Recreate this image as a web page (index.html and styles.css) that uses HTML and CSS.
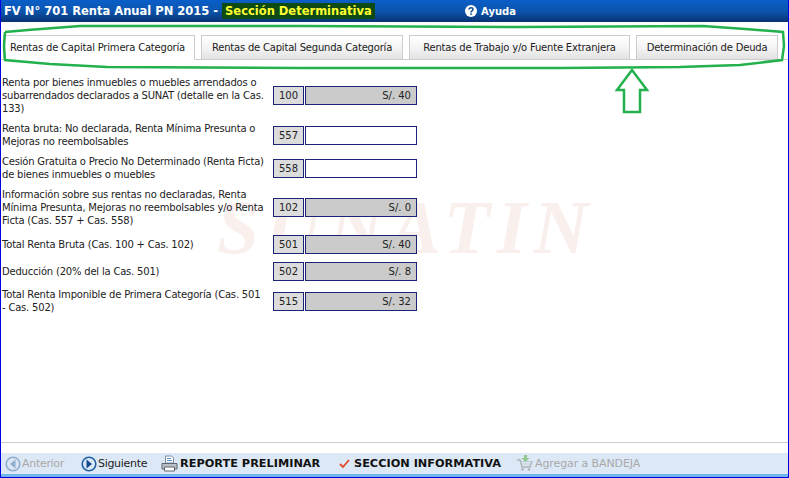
FILE: index.html
```html
<!DOCTYPE html>
<html lang="en">
<head>
    <meta charset="UTF-8">
    <meta name="viewport" content="width=device-width, initial-scale=1.0">
    <title>FV N° 701 Renta Anual PN 2015</title>
    <link rel="stylesheet" href="styles.css">
</head>
<body>

<div class="window">
    <div class="title-bar">
        <div class="title-text">FV N° 701 Renta Anual PN 2015 - <span class="title-section">Sección Determinativa</span></div>
        <div class="help">
            <svg class="help-icon" viewBox="0 0 12 12" width="12" height="12"><circle cx="6" cy="6" r="6" fill="#fff"/><path d="M4 4.600C4 3.400 4.900 2.800 6 2.800s2 .7 2 1.700c0 1.500-2 1.400-2 3" fill="none" stroke="#0b4a94" stroke-width="1.500"/><rect x="5.200" y="8.300" width="1.600" height="1.500" fill="#0b4a94"/></svg>
            Ayuda
        </div>
    </div>

    <div class="tabs">
        <div class="tab tab-active">Rentas de Capital Primera Categoría</div>
        <div class="tab tab-2">Rentas de Capital Segunda Categoría</div>
        <div class="tab tab-3">Rentas de Trabajo y/o Fuente Extranjera</div>
        <div class="tab tab-4">Determinación de Deuda</div>
    </div>

    <div class="content">
        <div class="watermark">SUNATIN</div>

        <div class="form-row">
            <div class="row-label">Renta por bienes inmuebles o muebles arrendados o subarrendados declarados a SUNAT (detalle en la Cas. 133)</div>
            <div class="cas">100</div>
            <div class="amount">S/. 40</div>
        </div>
        <div class="form-row">
            <div class="row-label">Renta bruta: No declarada, Renta Mínima Presunta o Mejoras no reembolsables</div>
            <div class="cas">557</div>
            <div class="amount amount-input"></div>
        </div>
        <div class="form-row">
            <div class="row-label">Cesión Gratuita o Precio No Determinado (Renta Ficta) de bienes inmuebles o muebles</div>
            <div class="cas">558</div>
            <div class="amount amount-input"></div>
        </div>
        <div class="form-row">
            <div class="row-label">Información sobre sus rentas no declaradas, Renta Mínima Presunta, Mejoras no reembolsables y/o Renta Ficta (Cas. 557 + Cas. 558)</div>
            <div class="cas">102</div>
            <div class="amount">S/. 0</div>
        </div>
        <div class="form-row">
            <div class="row-label">Total Renta Bruta (Cas. 100 + Cas. 102)</div>
            <div class="cas">501</div>
            <div class="amount">S/. 40</div>
        </div>
        <div class="form-row">
            <div class="row-label">Deducción (20% del la Cas. 501)</div>
            <div class="cas">502</div>
            <div class="amount">S/. 8</div>
        </div>
        <div class="form-row">
            <div class="row-label">Total Renta Imponible de Primera Categoría (Cas. 501<br>- Cas. 502)</div>
            <div class="cas">515</div>
            <div class="amount">S/. 32</div>
        </div>
    </div>

    <div class="footer">
        <div class="foot-item foot-disabled foot-prev">
            <svg viewBox="0 0 16 16" width="16" height="16"><circle cx="8" cy="8" r="6.800" fill="#dbe6f2" stroke="#8fb0d0" stroke-width="1.600"/><path d="M10.500 3.500v9L5 8z" fill="#8fb0d0"/></svg>
            Anterior
        </div>
        <div class="foot-item foot-next">
            <svg viewBox="0 0 16 16" width="16" height="16"><circle cx="8" cy="8" r="6.800" fill="#dbe8f6" stroke="#1f5fa8" stroke-width="1.600"/><path d="M5.500 3.500v9L11 8z" fill="#174a8c"/></svg>
            Siguiente
        </div>
        <div class="foot-item foot-bold foot-report">
            <svg viewBox="0 0 17 17" width="17" height="17"><path d="M4.500 1h6l2 2v5h-8z" fill="#fff" stroke="#7f8fa3"/><path d="M6 3.500h4M6 5.500h5" stroke="#5d8fc4"/><path d="M1 8.500h15v5.500H1z" fill="#b9c0c9" stroke="#5f6670"/><path d="M3.500 12h10v4h-10z" fill="#fff" stroke="#5f6670"/></svg>
            REPORTE PRELIMINAR
        </div>
        <div class="foot-item foot-bold foot-info">
            <svg viewBox="0 0 11 11" width="11" height="11"><path d="M1 6l3 3 6-7" fill="none" stroke="#e0472c" stroke-width="1.800"/></svg>
            SECCION INFORMATIVA
        </div>
        <div class="foot-item foot-disabled foot-cart">
            <svg viewBox="0 0 17 17" width="17" height="17"><path d="M1 5h3l2 7h8l2-6" fill="none" stroke="#a9b3b5" stroke-width="1.300"/><path d="M5 6.500h10M5.500 9h9" stroke="#c3cbcc"/><circle cx="6.500" cy="14.500" r="1.300" fill="#a9b3b5"/><circle cx="13" cy="14.500" r="1.300" fill="#a9b3b5"/><path d="M8 0h3v3h2.500L9.500 7 5.500 3H8z" fill="#8fc78f"/></svg>
            Agregar a BANDEJA
        </div>
    </div>
</div>

<!-- Green marks drawn over the screenshot -->
<svg class="annotation" viewBox="0 0 789 478" width="789" height="478">
    <polyline points="5,32 28,30 80,26 300,26 520,27 703,26 745,29 783,32 784,46 782,60 740,65 680,67 560,68 300,68 107,67 50,64 5,60 4,46 5,32" fill="none" stroke="#22b14c" stroke-width="2.500"/>
    <polygon points="632,70 617,90 624,90 624,112 640,112 640,90 647,90" fill="none" stroke="#22b14c" stroke-width="2.500"/>
</svg>

</body>
</html>
```

FILE: styles.css
```css
html, body {
    margin: 0;
    padding: 0;
}

body {
    width: 789px;
    height: 478px;
    overflow: hidden;
    font-family: "DejaVu Sans", sans-serif;
    font-size: 10px;
    letter-spacing: -0.2px;
    color: #222;
    background-color: #fff;
}

.window {
    box-sizing: border-box;
    width: 789px;
    height: 478px;
    display: flex;
    flex-direction: column;
    border-left: 1px solid #0000e6;
    border-right: 1px solid #0000e6;
    border-bottom: 1px solid #0000e6;
}

.title-bar {
    height: 22px;
    flex-shrink: 0;
    position: relative;
    display: flex;
    align-items: center;
    padding-left: 3px;
    background: linear-gradient(#0a5ec8, #0b55ae 50%, #0a3272);
    color: #fff;
    font-weight: bold;
    letter-spacing: 0;
}

.title-text {
    font-size: 11.500px;
}

.title-section {
    display: inline-block;
    padding: 1px 3px;
    background-color: #0d4a14;
    color: #ffff33;
}

.help {
    position: absolute;
    left: 464px;
    top: 5px;
    display: flex;
    align-items: center;
    gap: 4px;
    font-size: 10px;
}

.tabs {
    height: 38px;
    flex-shrink: 0;
    box-sizing: border-box;
    display: flex;
    align-items: flex-end;
    gap: 6px;
    padding-left: 2px;
    border-bottom: 1px solid #ccc;
}

.tab {
    box-sizing: border-box;
    height: 25px;
    margin-bottom: -1px;
    display: flex;
    align-items: center;
    justify-content: center;
    border: 1px solid #ccc;
    background: linear-gradient(#fff, #f4f4f4 50%, #e2e2e2);
}

.tab-active {
    width: 192px;
    padding-right: 3px;
    background: #fff;
    border-bottom-color: #fff;
}

.tab-2 { width: 202px; }
.tab-3 { width: 221px; }
.tab-4 { width: 142px; }

.content {
    flex: 1;
    position: relative;
    display: flex;
    flex-direction: column;
    gap: 7px;
    padding: 16px 0 0 1px;
    border-bottom: 1px solid #ccc;
    line-height: 13px;
}

.watermark {
    position: absolute;
    left: 216px;
    top: 127px;
    font-family: "Liberation Serif", serif;
    font-style: italic;
    font-weight: bold;
    font-size: 76px;
    line-height: 80px;
    letter-spacing: 7px;
    color: #f9efed;
}

.form-row {
    position: relative;
    display: flex;
    align-items: center;
    min-height: 20px;
}

.row-label {
    box-sizing: border-box;
    width: 271px;
    padding-right: 6px;
    flex-shrink: 0;
}

.cas, .amount {
    box-sizing: border-box;
    height: 19px;
    display: flex;
    align-items: center;
    border: 1px solid #1a2375;
    letter-spacing: 0;
}

.cas {
    width: 31px;
    margin-right: 1px;
    justify-content: center;
    background-color: #dcdcdc;
}

.amount {
    width: 112px;
    justify-content: flex-end;
    padding-right: 5px;
    background-color: #cbcbcb;
}

.amount-input {
    background-color: #fff;
}

.footer {
    height: 24px;
    flex-shrink: 0;
    margin-top: 10px;
    position: relative;
    display: flex;
    align-items: center;
    font-size: 11px;
    letter-spacing: -0.1px;
    background-color: #dce8f5;
    border-bottom: 3px solid #6fb5ee;
    box-sizing: border-box;
}

.foot-item {
    display: flex;
    align-items: center;
    gap: 1px;
    white-space: nowrap;
}

.foot-disabled {
    color: #a9a9a9;
}

.foot-bold {
    font-weight: bold;
    color: #111;
    font-size: 11.300px;
    letter-spacing: 0;
}

.foot-prev { margin-left: 4px; width: 76px; letter-spacing: -0.3px; }
.foot-next { width: 80px; letter-spacing: -0.3px; }
.foot-report { width: 178px; gap: 2px; }
.foot-info { width: 177px; gap: 4px; }
.foot-cart { gap: 2px; }

.annotation {
    position: absolute;
    left: 0;
    top: 0;
    pointer-events: none;
}
```
